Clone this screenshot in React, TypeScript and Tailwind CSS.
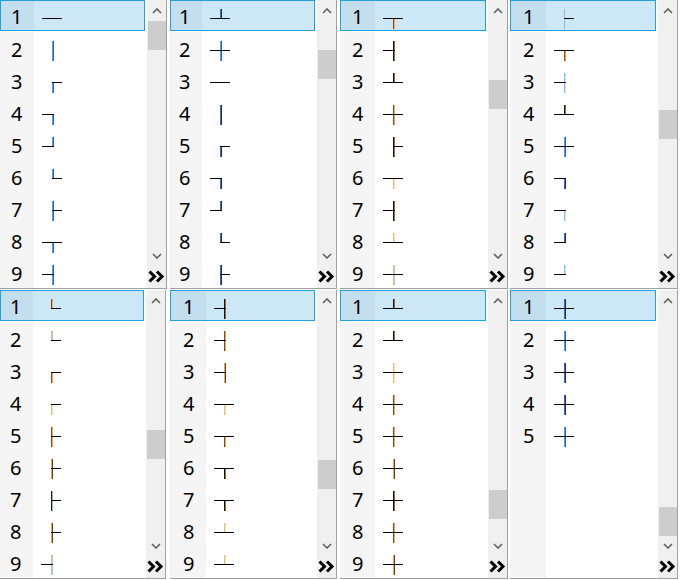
import React from "react";

type Arms = { u?: boolean; d?: boolean; l?: boolean; r?: boolean };

const ARMS: Record<string, Arms> = {
  "─": { l: true, r: true },
  "│": { u: true, d: true },
  "┌": { r: true, d: true },
  "┐": { l: true, d: true },
  "┘": { l: true, u: true },
  "└": { r: true, u: true },
  "├": { u: true, d: true, r: true },
  "┬": { l: true, r: true, d: true },
  "┤": { u: true, d: true, l: true },
  "┴": { l: true, r: true, u: true },
  "┼": { u: true, d: true, l: true, r: true },
};

const TONES: Record<string, [string, string]> = {
  b: ["#6a9ad6", "#1766c8"],
  n: ["#4a6aa0", "#12306c"],
  o: ["#8a4a14", "#e8a860"],
  ok: ["#e8a860", "#6a3a14"],
  k: ["#1e120a", "#9a6a40"],
  lo: ["#eeb878", "#f8dcb8"],
  lb: ["#84bcee", "#cce4fa"],
  lob: ["#eeb878", "#a0caf2"],
  kb: ["#2a1a10", "#8cbcee"],
  "": ["#000000", "#000000"],
};

function Glyph({ g, t }: { g: string; t: string }) {
  const a = ARMS[g];
  const c = TONES[t] ?? TONES[""];
  const c1 = c[0];
  const c2 = c[1];
  return (
    <svg width="20" height="20" viewBox="0 0 20 20" className="block">
      {a.u && (
        <>
          <rect x="10" y="0" width="1" height="10" fill={c1} />
          <rect x="11" y="0" width="1" height="10" fill={c2} />
        </>
      )}
      {a.d && (
        <>
          <rect x="10" y="9" width="1" height="11" fill={c1} />
          <rect x="11" y="9" width="1" height="11" fill={c2} />
        </>
      )}
      {a.l && <rect x="0" y="9" width="12" height="1" fill="#000" />}
      {a.r && <rect x="10" y="9" width="10" height="1" fill="#000" />}
    </svg>
  );
}

type Panel = {
  col: string;
  colSel: string;
  pl: string;
  plSel: string;
  list: string;
  sel: string;
  inner: string;
  thumb: number;
  rows: [string, string][];
};

const PANELS: Panel[] = [
  {
    col: "w-[34px]", colSel: "w-[33px]", pl: "pl-[11px]", plSel: "pl-[10px]",
    list: "w-[147px]", sel: "w-[145px]", inner: "w-[167px]", thumb: 21,
    rows: [["─", ""], ["│", "b"], ["┌", "b"], ["┐", "b"], ["┘", "b"], ["└", "b"], ["├", "b"], ["┬", "b"], ["┤", "b"]],
  },
  {
    col: "w-[32px]", colSel: "w-[31px]", pl: "pl-[9px]", plSel: "pl-[8px]",
    list: "w-[147px]", sel: "w-[145px]", inner: "w-[167px]", thumb: 50,
    rows: [["┴", "n"], ["┼", "b"], ["─", ""], ["│", "n"], ["┌", "n"], ["┐", "n"], ["┘", "n"], ["└", "n"], ["├", "n"]],
  },
  {
    col: "w-[35px]", colSel: "w-[34px]", pl: "pl-[12px]", plSel: "pl-[11px]",
    list: "w-[148px]", sel: "w-[146px]", inner: "w-[168px]", thumb: 80,
    rows: [["┬", "o"], ["┤", "k"], ["┴", "k"], ["┼", "o"], ["├", "k"], ["┬", "lo"], ["┤", "k"], ["┴", "lo"], ["┼", "lob"]],
  },
  {
    col: "w-[36px]", colSel: "w-[35px]", pl: "pl-[13px]", plSel: "pl-[12px]",
    list: "w-[148px]", sel: "w-[146px]", inner: "w-[168px]", thumb: 110,
    rows: [["├", "lb"], ["┬", "o"], ["┤", "lb"], ["┴", "k"], ["┼", "b"], ["┐", "n"], ["┐", "lb"], ["┘", "n"], ["┘", "lb"]],
  },
  {
    col: "w-[33px]", colSel: "w-[32px]", pl: "pl-[10px]", plSel: "pl-[9px]",
    list: "w-[146px]", sel: "w-[144px]", inner: "w-[166px]", thumb: 140,
    rows: [["└", "o"], ["└", "lob"], ["┌", "o"], ["┌", "lo"], ["├", "o"], ["├", "ok"], ["├", "kb"], ["├", "ok"], ["┤", "lob"]],
  },
  {
    col: "w-[36px]", colSel: "w-[35px]", pl: "pl-[13px]", plSel: "pl-[12px]",
    list: "w-[147px]", sel: "w-[145px]", inner: "w-[167px]", thumb: 170,
    rows: [["┤", "k"], ["┤", "o"], ["┤", "ok"], ["┬", "lo"], ["┬", "o"], ["┬", "k"], ["┬", "k"], ["┴", "lo"], ["┴", "lo"]],
  },
  {
    col: "w-[35px]", colSel: "w-[34px]", pl: "pl-[12px]", plSel: "pl-[11px]",
    list: "w-[148px]", sel: "w-[146px]", inner: "w-[168px]", thumb: 200,
    rows: [["┴", "k"], ["┴", "k"], ["┼", "lo"], ["┼", "o"], ["┼", "o"], ["┼", "ok"], ["┼", "k"], ["┼", "o"], ["┼", "ok"]],
  },
  {
    col: "w-[36px]", colSel: "w-[35px]", pl: "pl-[13px]", plSel: "pl-[12px]",
    list: "w-[148px]", sel: "w-[146px]", inner: "w-[168px]", thumb: 217,
    rows: [["┼", "n"], ["┼", "b"], ["┼", "n"], ["┼", "n"], ["┼", "b"]],
  },
];

function Chevron({ up }: { up: boolean }) {
  return (
    <svg width="10" height="6" viewBox="0 0 10 6" className="block">
      <polyline
        points={up ? "1,5 5,1 9,5" : "1,1 5,5 9,1"}
        fill="none"
        stroke="#606060"
        strokeWidth="1.6"
      />
    </svg>
  );
}

function More() {
  return (
    <svg width="17" height="13" viewBox="0 0 17 13" className="block">
      <polyline points="1.5,1.5 6.5,6.5 1.5,11.5" fill="none" stroke="#000" strokeWidth="3" strokeLinejoin="miter" />
      <polyline points="9,1.5 14,6.5 9,11.5" fill="none" stroke="#000" strokeWidth="3" strokeLinejoin="miter" />
    </svg>
  );
}

function PanelView({ p }: { p: Panel }) {
  return (
    <div className="w-[170px] h-[290px] bg-white">
      <div className={`flex h-[289px] border-r border-b border-[#a0a0a0] ${p.inner}`}>
        <div className={`flex flex-col h-[288px] bg-white ${p.list}`}>
          {p.rows.map(([g, t], i) =>
            i === 0 ? (
              <div key={i} className={`flex h-[31px] mb-[1px] border border-[#26a0da] bg-[#cce8f6] ${p.sel}`}>
                <div className={`h-full bg-[#c3dfee] pt-[3px] leading-[26px] ${p.colSel} ${p.plSel}`}>{i + 1}</div>
                <div className="pl-[8px] pt-[8px]">
                  <Glyph g={g} t={t} />
                </div>
              </div>
            ) : (
              <div key={i} className="flex h-[32px]">
                <div className={`h-full bg-[#f5f5f5] pt-[4px] leading-[28px] ${p.col} ${p.pl}`}>{i + 1}</div>
                <div className="pl-[8px] pt-[9px]">
                  <Glyph g={g} t={t} />
                </div>
              </div>
            )
          )}
          <div className="flex flex-1">
            <div className={`h-full bg-[#f5f5f5] ${p.col}`} />
          </div>
        </div>
        <div className="flex flex-col flex-1 h-[288px] bg-[#f0f0f0]">
          <div className="h-[21px] flex items-center justify-center">
            <Chevron up />
          </div>
          <div className="h-[225px] pl-[1px]">
            <div className="h-[29px] bg-[#cdcdcd]" style={{ marginTop: p.thumb - 21 }} />
          </div>
          <div className="h-[19px] flex items-center justify-center">
            <Chevron up={false} />
          </div>
          <div className="h-[23px] flex items-center justify-center">
            <More />
          </div>
        </div>
      </div>
    </div>
  );
}

export default function App() {
  return (
    <div
      className="w-[680px] h-[580px] bg-white grid grid-cols-[170px_170px_170px_170px] grid-rows-[290px_290px] text-[20px] text-black overflow-hidden"
      style={{ fontFamily: '"Noto Sans", "Open Sans", sans-serif' }}
    >
      {PANELS.map((p, i) => (
        <PanelView key={i} p={p} />
      ))}
    </div>
  );
}
